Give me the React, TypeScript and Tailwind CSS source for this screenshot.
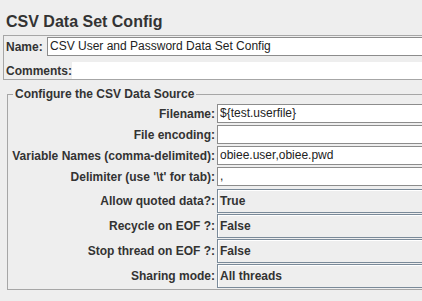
import React from "react";

const fields = [
  { label: "Filename:", value: "${test.userfile}" },
  { label: "File encoding:", value: "" },
  { label: "Variable Names (comma-delimited):", value: "obiee.user,obiee.pwd" },
  { label: "Delimiter (use '\\t' for tab):", value: "," },
];

const combos = [
  { label: "Allow quoted data?:", value: "True" },
  { label: "Recycle on EOF ?:", value: "False" },
  { label: "Stop thread on EOF ?:", value: "False" },
  { label: "Sharing mode:", value: "All threads" },
];

export default function App() {
  return (
    <div className="w-[422px] h-[301px] overflow-hidden bg-[#eeeeee] text-[#333333] font-['Liberation_Sans',Arial,sans-serif]">
      <div className="w-[470px]">
        <h1 className="pt-[12px] pl-[6px] text-[16px] leading-[19px] font-bold">CSV Data Set Config</h1>

        <div className="mt-[4px] ml-[3px] border border-[#a6a6a6] pl-[2px] pt-[1px]">
          <div className="flex items-center h-[19px]">
            <div className="w-[41px] text-[12px] leading-[14px] font-bold">Name:</div>
            <div className="flex-1 h-[19px] border border-[#8c8c8c] bg-white pl-[2px] text-[12px] leading-[17px] text-[#222222]">
              CSV User and Password Data Set Config
            </div>
          </div>
          <div className="flex items-center h-[17px] mt-[6px]">
            <div className="w-[66px] text-[12px] leading-[14px] font-bold">Comments:</div>
            <div className="flex-1 h-[17px] bg-white" />
          </div>
        </div>

        <div className="relative mt-[14px] ml-[7px] border border-[#a6a6a6] pt-[9px] pb-[1px]">
          <span className="absolute left-[5px] top-[-8px] px-[2px] bg-[#eeeeee] text-[12px] leading-[14px] font-bold">
            Configure the CSV Data Source
          </span>
          <div className="flex flex-col gap-[2px]">
            {fields.map((f) => (
              <div key={f.label} className="flex items-center h-[19px]">
                <div className="w-[209px] pr-[2px] text-right text-[12px] leading-[14px] font-bold whitespace-nowrap">
                  {f.label}
                </div>
                <div className="flex-1 h-[19px] border border-[#8c8c8c] bg-white pl-[2px] text-[12px] leading-[17px] text-[#222222]">
                  {f.value}
                </div>
              </div>
            ))}
          </div>
          <div className="flex flex-col gap-[1px] mt-[3px]">
            {combos.map((c, i) => (
              <div key={i} className="flex items-center h-[24px]">
                <div className="w-[209px] pr-[2px] text-right text-[12px] leading-[14px] font-bold whitespace-nowrap">
                  {c.label}
                </div>
                <div className="flex-1 h-[24px] border border-[#7a8a99] shadow-[inset_1px_1px_0_#ffffff] bg-[#eeeeee] pl-[2px] text-[12px] leading-[22px] font-bold">
                  {c.value}
                </div>
              </div>
            ))}
          </div>
        </div>
      </div>
    </div>
  );
}
